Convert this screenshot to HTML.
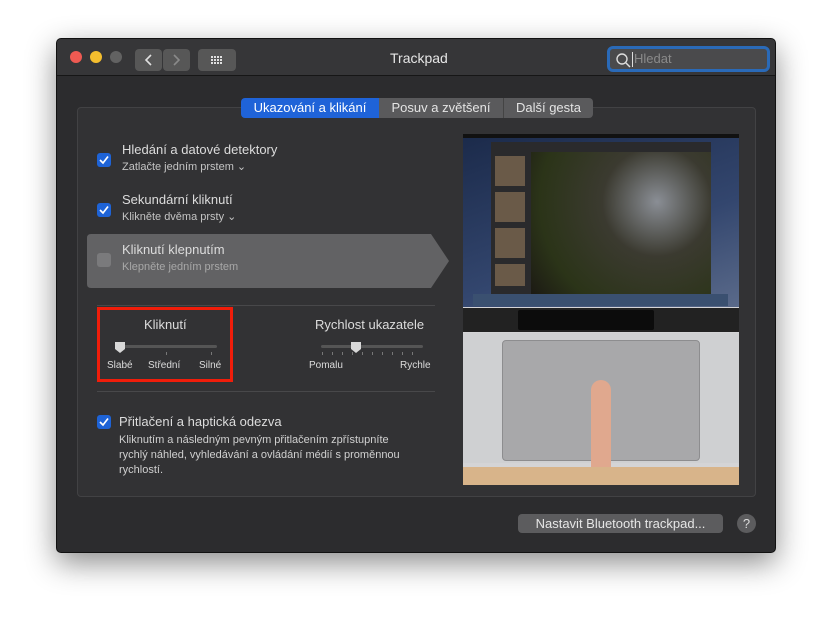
<!DOCTYPE html>
<html><head><meta charset="utf-8"><style>
*{margin:0;padding:0;box-sizing:border-box}
body{width:832px;height:627px;background:#fff;position:relative;overflow:hidden;font-family:"Liberation Sans",sans-serif;color:#dcdcdc}
.win{position:absolute;left:56px;top:38px;width:720px;height:515px;background:#2c2c2e;border:1px solid #111;border-radius:5px;box-shadow:0 10px 30px rgba(0,0,0,.45);overflow:hidden}
.tb{position:absolute;left:0;top:0;width:100%;height:37px;background:#363638;border-bottom:1px solid #161616}
.dot{position:absolute;top:12px;width:12px;height:12px;border-radius:50%}
.btn{position:absolute;top:10px;height:22px;background:#575757;border-radius:4px}
.a{position:absolute;font-size:13px;white-space:nowrap}
.panel{position:absolute;left:20px;top:68px;width:679px;height:390px;background:#323234;border:1px solid #424244;border-radius:4px}
.cb{position:absolute;width:14px;height:14px;border-radius:3px;background:#1e63d6}
.cb svg{position:absolute;left:2px;top:2px}
.sub{font-size:11px;color:#c4c4c4}
.tab{position:absolute;top:59px;height:20px;font-size:13px;text-align:center;line-height:20px;background:#5a5a5c;color:#e4e4e4}
</style></head><body>
<div class="win">
 <div class="tb">
  <div class="dot" style="left:13px;background:#ee5a52"></div>
  <div class="dot" style="left:33px;background:#f4be2e"></div>
  <div class="dot" style="left:53px;background:#626262"></div>
  <div class="btn" style="left:78px;width:27px"><svg width="27" height="22"><path d="M16 6 L11 11 L16 16" stroke="#e0e0e0" stroke-width="1.6" fill="none"/></svg></div>
  <div class="btn" style="left:106px;width:27px"><svg width="27" height="22"><path d="M11 6 L16 11 L11 16" stroke="#8a8a8a" stroke-width="1.6" fill="none"/></svg></div>
  <div class="btn" style="left:141px;width:38px"><svg width="38" height="22"><g fill="#e0e0e0"><rect x="13" y="7" width="2" height="2"/><rect x="16" y="7" width="2" height="2"/><rect x="19" y="7" width="2" height="2"/><rect x="22" y="7" width="2" height="2"/><rect x="13" y="10" width="2" height="2"/><rect x="16" y="10" width="2" height="2"/><rect x="19" y="10" width="2" height="2"/><rect x="22" y="10" width="2" height="2"/><rect x="13" y="13" width="2" height="2"/><rect x="16" y="13" width="2" height="2"/><rect x="19" y="13" width="2" height="2"/><rect x="22" y="13" width="2" height="2"/></g></svg></div>
  <div class="a" style="left:333px;top:11px;font-size:14px;color:#e6e6e6">Trackpad</div>
  <div style="position:absolute;left:550px;top:7px;width:163px;height:26px;border:3px solid #2a6ab8;border-radius:6px;background:#4a4a4c">
   <svg width="20" height="20" style="position:absolute;left:4px;top:1px"><circle cx="8" cy="9" r="5" stroke="#ddd" stroke-width="1.4" fill="none"/><path d="M12 13 L16 17" stroke="#ddd" stroke-width="1.5"/></svg>
   <div style="position:absolute;left:22px;top:3px;width:1px;height:15px;background:#ddd"></div>
   <div class="a" style="left:24px;top:2px;color:#8a8a8a">Hledat</div>
  </div>
 </div>
 <div class="panel"></div>
 <div class="tab" style="left:184px;width:138px;background:#1f63d8;color:#fff;border-radius:4px 0 0 4px">Ukazování a klikání</div>
 <div class="tab" style="left:322px;width:125px;border-right:1px solid #444">Posuv a zvětšení</div>
 <div class="tab" style="left:447px;width:89px;border-radius:0 4px 4px 0">Další gesta</div>

 <div class="cb" style="left:40px;top:114px"><svg width="10" height="10"><path d="M1 5 L4 8 L9 1.5" stroke="#fff" stroke-width="1.7" fill="none"/></svg></div>
 <div class="a" style="left:65px;top:103px">Hledání a datové detektory</div>
 <div class="a sub" style="left:65px;top:121px">Zatlačte jedním prstem ⌄</div>
 <div class="cb" style="left:40px;top:164px"><svg width="10" height="10"><path d="M1 5 L4 8 L9 1.5" stroke="#fff" stroke-width="1.7" fill="none"/></svg></div>
 <div class="a" style="left:65px;top:153px">Sekundární kliknutí</div>
 <div class="a sub" style="left:65px;top:171px">Klikněte dvěma prsty ⌄</div>
 <svg style="position:absolute;left:30px;top:195px" width="365" height="54"><path d="M4 0 H344 L362 27 L344 54 H4 Q0 54 0 50 V4 Q0 0 4 0Z" fill="#626264"/></svg>
 <div style="position:absolute;left:40px;top:214px;width:14px;height:14px;border-radius:3px;background:#7a7a7c"></div>
 <div class="a" style="left:65px;top:203px">Kliknutí klepnutím</div>
 <div class="a sub" style="left:65px;top:222px;color:#a8a8a8">Klepněte jedním prstem</div>

 <div style="position:absolute;left:40px;top:266px;width:338px;height:1px;background:#48484a"></div>
 <div style="position:absolute;left:40px;top:352px;width:338px;height:1px;background:#48484a"></div>
 <div style="position:absolute;left:40px;top:268px;width:136px;height:75px;border:3px solid #f01d0a"></div>
 <div class="a" style="left:87px;top:278px">Kliknutí</div>
 <div style="position:absolute;left:60px;top:306px;width:100px;height:3px;border-radius:2px;background:#555"></div>
 <svg style="position:absolute;left:57px;top:302px" width="12" height="14"><path d="M1 1 H11 V8 L6 12 L1 8Z" fill="#d8d8d8"/></svg>
 <div style="position:absolute;left:109px;top:313px;width:1px;height:3px;background:#777"></div>
 <div style="position:absolute;left:154px;top:313px;width:1px;height:3px;background:#777"></div>
 <div class="a" style="left:50px;top:321px;font-size:10px">Slabé</div>
 <div class="a" style="left:91px;top:321px;font-size:10px">Střední</div>
 <div class="a" style="left:142px;top:321px;font-size:10px">Silné</div>
 <div class="a" style="left:258px;top:278px">Rychlost ukazatele</div>
 <div style="position:absolute;left:264px;top:306px;width:102px;height:3px;border-radius:2px;background:#555"></div>
 <svg style="position:absolute;left:293px;top:302px" width="12" height="14"><path d="M1 1 H11 V8 L6 12 L1 8Z" fill="#d8d8d8"/></svg>
 <div style="position:absolute;left:265px;top:313px;width:100px;height:3px;background:repeating-linear-gradient(90deg,#777 0 1px,transparent 1px 10px)"></div>
 <div class="a" style="left:252px;top:321px;font-size:10px">Pomalu</div>
 <div class="a" style="left:343px;top:321px;font-size:10px">Rychle</div>

 <div class="cb" style="left:40px;top:376px"><svg width="10" height="10"><path d="M1 5 L4 8 L9 1.5" stroke="#fff" stroke-width="1.7" fill="none"/></svg></div>
 <div class="a" style="left:62px;top:375px">Přitlačení a haptická odezva</div>
 <div class="a" style="left:62px;top:394px;font-size:11px;line-height:15px;color:#d0d0d0">Kliknutím a následným pevným přitlačením zpřístupníte<br>rychlý náhled, vyhledávání a ovládání médií s proměnnou<br>rychlostí.</div>

 <div style="position:absolute;left:406px;top:95px;width:276px;height:351px;overflow:hidden;background:#d4d4d6">
  <div style="position:absolute;left:0;top:0;width:276px;height:173px;background:linear-gradient(160deg,#1b2a4a,#33466e 60%,#5a6a8a)"></div>
  <div style="position:absolute;left:0;top:0;width:276px;height:4px;background:#111"></div>
  <div style="position:absolute;left:28px;top:8px;width:220px;height:152px;background:#2a2a2c"></div>
  <div style="position:absolute;left:32px;top:22px;width:30px;height:130px;background:repeating-linear-gradient(180deg,#6a5a48 0 30px,#2a2a2c 30px 36px)"></div>
  <div style="position:absolute;left:68px;top:18px;width:180px;height:142px;background:radial-gradient(circle at 70% 35%,#8a8e95,#3b3a30 35%,#2b3418 75%,#1c1a14)"></div>
  <div style="position:absolute;left:10px;top:160px;width:255px;height:12px;background:#3a5070"></div>
  <div style="position:absolute;left:0;top:174px;width:276px;height:24px;background:#222"></div>
  <div style="position:absolute;left:55px;top:176px;width:136px;height:20px;background:#0c0c0c;border-radius:2px"></div>
  <div style="position:absolute;left:0;top:199px;width:276px;height:130px;background:#cfd0d2"></div>
  <div style="position:absolute;left:39px;top:206px;width:198px;height:121px;border-radius:4px;background:#a8a8aa;border:1px solid #8d8d8f"></div>
  <div style="position:absolute;left:128px;top:246px;width:20px;height:110px;border-radius:10px;background:#e0a88e"></div>
  <div style="position:absolute;left:0;top:333px;width:276px;height:18px;background:#d8b48a"></div>
 </div>

 <div style="position:absolute;left:461px;top:475px;width:205px;height:19px;border-radius:4px;background:#5c5c5e;font-size:13px;color:#e6e6e6;text-align:center;line-height:19px">Nastavit Bluetooth trackpad...</div>
 <div style="position:absolute;left:680px;top:475px;width:19px;height:19px;border-radius:50%;background:#5c5c5e;font-size:13px;color:#ddd;text-align:center;line-height:19px">?</div>
</div>
</body></html>
